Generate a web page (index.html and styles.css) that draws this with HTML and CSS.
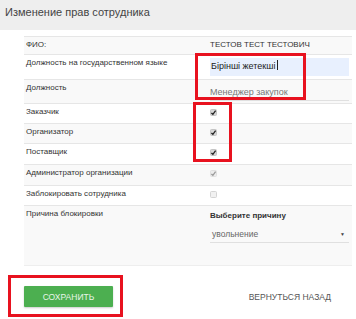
FILE: index.html
```html
<!doctype html>
<html lang="ru">
<head>
  <meta charset="UTF-8">
  <title>Изменение прав сотрудника</title>
  <link rel="stylesheet" href="styles.css">
</head>
<body>
  <div class="title">Изменение прав сотрудника</div>

  <div class="rights">
    <div class="row r-fio">
      <div class="label">ФИО:</div>
      <div class="value">ТЕСТОВ ТЕСТ ТЕСТОВИЧ</div>
    </div>
    <div class="row r-pos-kz">
      <div class="label">Должность на государственном языке</div>
      <div class="value"><div class="input filled">Бірінші жетекші<span class="caret"></span></div></div>
    </div>
    <div class="row r-pos">
      <div class="label">Должность</div>
      <div class="value"><div class="input plain">Менеджер закупок</div></div>
    </div>
    <div class="row r-check">
      <div class="label">Заказчик</div>
      <div class="value"><span class="box on"><svg viewBox="0 0 7 7"><path d="M1.4 3.9 L2.9 5.3 L5.6 1.7"/></svg></span></div>
    </div>
    <div class="row r-check">
      <div class="label">Организатор</div>
      <div class="value"><span class="box on"><svg viewBox="0 0 7 7"><path d="M1.4 3.9 L2.9 5.3 L5.6 1.7"/></svg></span></div>
    </div>
    <div class="row r-check r-tall">
      <div class="label">Поставщик</div>
      <div class="value"><span class="box on"><svg viewBox="0 0 7 7"><path d="M1.4 3.9 L2.9 5.3 L5.6 1.7"/></svg></span></div>
    </div>
    <div class="row r-check r-tall">
      <div class="label">Администратор организации</div>
      <div class="value"><span class="box off-on"><svg viewBox="0 0 7 7"><path d="M1.4 3.9 L2.9 5.3 L5.6 1.7"/></svg></span></div>
    </div>
    <div class="row r-check">
      <div class="label">Заблокировать сотрудника</div>
      <div class="value"><span class="box"></span></div>
    </div>
    <div class="row r-reason">
      <div class="label">Причина блокировки</div>
      <div class="value">
        <div class="select-label">Выберите причину</div>
        <div class="select">увольнение<span class="arrow">▼</span></div>
      </div>
    </div>
  </div>

  <div class="actions">
    <button class="btn-save">СОХРАНИТЬ</button>
    <a class="btn-back">ВЕРНУТЬСЯ НАЗАД</a>
  </div>

  <!-- пометки -->
  <div class="mark mark-pos"></div>
  <div class="mark mark-roles"></div>
  <div class="mark mark-save"></div>
</body>
</html>
```

FILE: styles.css
```css
* {box-sizing: border-box;}
body {margin: 0; background: #fff; font-family: "Liberation Sans", Arial, sans-serif; color: #333; position: relative; height: 319px; overflow: hidden;}

.title {height: 30px; padding: 5px 5px; background: #eeeeee; font-size: 11px; line-height: 14px; color: #444;}

.rights {margin: 6px 4px 0 24px; border-bottom: 1px solid #eee;}
.row {display: grid; grid-template-columns: 181px 1fr; border-top: 1px solid #e6e6e6; font-size: 8px; line-height: 10px;}
.row:nth-child(odd) {background: #f9f9f9;}
.label {padding: 3px 0 0 2px;}
.value {padding: 3px 3px 0 5px;}

.r-fio    {height: 18px;}
.r-pos-kz {height: 25px;}
.r-pos    {height: 24px;}
.r-check  {height: 20px;}
.r-tall   {height: 21px;}
.r-reason {height: 60px;}

.input {font-size: 9px; line-height: 17px; height: 18px;}
.input.filled {background: #e8f0fe; padding-left: 1px; color: #222;}
.input.plain {margin-top: 1px; height: 17px; color: #777; border-bottom: 1px solid #e0e0e0;}
.caret {display: inline-block; width: 1px; height: 10px; background: #222; vertical-align: -1px; margin-left: 1px;}

.box {display: block; width: 7px; height: 7px; margin-top: 2px; border-radius: 1.5px; background: #f1f1f1; border: 1px solid #d4d4d4;}
.box svg {display: block; width: 7px; height: 7px; margin: -1px;}
.box path {fill: none; stroke: #222; stroke-width: 1.3;}
.box.on {background: #d6d6d6; border-color: #c4c4c4;}
.box.off-on {background: #ececec; border-color: #e0e0e0;}
.box.off-on path {stroke: #9a9a9a;}

.select-label {font-weight: bold; margin-top: 2px; color: #333;}
.select {position: relative; margin-top: 7px; height: 15px; font-size: 8.5px; line-height: 12px; color: #666; border-bottom: 1px solid #e0e0e0; padding-left: 2px;}
.arrow {position: absolute; right: 4px; top: 0; font-size: 5px; color: #444;}

.actions {display: flex; align-items: center; padding: 20px 25px 0 24px;}
.btn-save {width: 89px; height: 21px; border: none; border-radius: 1px; background: #4caf50; color: #e8f5e9; font-family: inherit; font-size: 8.5px; padding: 0; box-shadow: 0 1px 2px rgba(0,0,0,.2);}
.btn-back {margin-left: auto; font-size: 8.5px; color: #555;}

.mark {position: absolute; border: 3px solid #e8121f;}
.mark-pos   {left: 195px; top: 53px; width: 111px; height: 47px;}
.mark-roles {left: 193px; top: 102px; width: 39px; height: 60px;}
.mark-save  {left: 8px; top: 275px; width: 115px; height: 42px;}
```
